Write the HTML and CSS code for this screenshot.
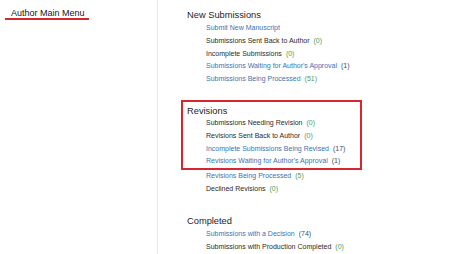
FILE: index.html
```html
<html>
<head>
    <title>Author Main Menu</title>
    <link rel="stylesheet" href="styles.css">
</head>
<body>
    <div class="page">
        <div class="sidebar">
            <h1 class="title">Author Main Menu</h1>
        </div>
        <div class="main">
            <div class="section">
                <h2>New Submissions</h2>
                <ul>
                    <li><a href="#">Submit New Manuscript</a></li>
                    <li>Submissions Sent Back to Author<span class="count">(0)</span></li>
                    <li>Incomplete Submissions<span class="count">(0)</span></li>
                    <li><a href="#">Submissions Waiting for Author's Approval</a><span class="count dark">(1)</span></li>
                    <li><a href="#">Submissions Being Processed</a><span class="count">(51)</span></li>
                </ul>
            </div>

            <div class="section revisions">
                <div class="highlight">
                    <h2>Revisions</h2>
                    <ul>
                        <li>Submissions Needing Revision<span class="count">(0)</span></li>
                        <li>Revisions Sent Back to Author<span class="count">(0)</span></li>
                        <li><a href="#">Incomplete Submissions Being Revised</a><span class="count dark">(17)</span></li>
                        <li><a href="#">Revisions Waiting for Author's Approval</a><span class="count dark">(1)</span></li>
                    </ul>
                </div>
                <ul>
                    <li><a href="#">Revisions Being Processed</a><span class="count">(5)</span></li>
                    <li>Declined Revisions<span class="count">(0)</span></li>
                </ul>
            </div>

            <div class="section completed">
                <h2>Completed</h2>
                <ul>
                    <li><a href="#">Submissions with a Decision</a><span class="count dark">(74)</span></li>
                    <li>Submissions with Production Completed<span class="count">(0)</span></li>
                </ul>
            </div>
        </div>
    </div>
</body>
</html>
```

FILE: styles.css
```css
*{
    margin: 0;
    padding: 0;
    box-sizing: border-box;
}
body{
    background-color: white;
    font-family: "Liberation Sans", Arial, sans-serif;
    color: #222;
}
.page{
    display: flex;
    height: 254px;
}
.sidebar{
    width: 158px;
    padding-top: 9px;
    padding-left: 5px;
    border-right: 1px solid #e8e8e8;
}
.title{
    display: inline-block;
    font-size: 9px;
    font-weight: normal;
    line-height: 9px;
    color: #151515;
    padding-left: 6px;
    padding-right: 4px;
    border-bottom: 2px solid #d7262e;
}
.main{
    padding-top: 9px;
    padding-left: 29px;
}
h2{
    font-size: 9.3px;
    font-weight: normal;
    line-height: 12px;
    margin-bottom: 1px;
    color: #1e1e1e;
}
ul{
    list-style: none;
    padding-left: 19px;
}
li{
    font-size: 7px;
    line-height: 12.8px;
    white-space: nowrap;
    color: #2a2a2a;
}
a{
    color: #3a73b3;
    text-decoration: none;
}
.count{
    margin-left: 4px;
    color: #4f9a5c;
}
.count.dark{
    color: #35506d;
}
.revisions{
    margin-top: 14px;
}
.highlight{
    width: 181px;
    margin-left: -6px;
    padding-top: 3px;
    padding-left: 4px;
    border: 2px solid #d7262e;
}
.highlight h2{
    margin-bottom: 0;
}
.completed{
    margin-top: 19px;
}
```
